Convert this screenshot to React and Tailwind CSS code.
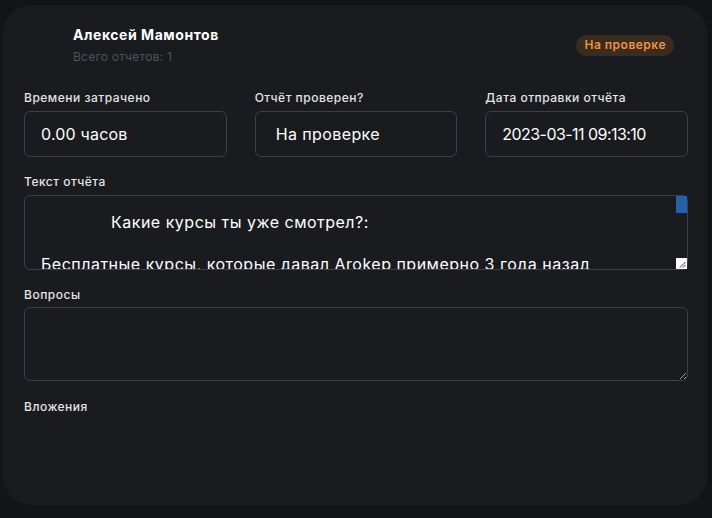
import React from "react";

const reportText =
  "              Какие курсы ты уже смотрел?:\n\nБесплатные курсы, которые давал Arokep примерно 3 года назад\n\nЧто ты уже умеешь делать?:\n\nВерстать простые страницы, немного знаю JavaScript\n\nПочему ты хочешь учиться у нас?:\n\nХочу стать разработчиком и найти работу\n\nСколько времени готов уделять?:\n\nПримерно 3-4 часа в день";

export default function App() {
  return (
    <div
      className="min-h-[518px] w-[712px] bg-[#131418] pt-[5px] pl-[3px] pr-[5px] pb-[13px]"
      style={{ fontFamily: "Inter, 'Noto Sans', sans-serif" }}
    >
      <div className="h-[500px] rounded-[28px] bg-[#1a1b1f] pt-[20px] pl-[21px] pr-[19px]">
        {/* header */}
        <div className="flex items-center">
          <div className="w-[37px] h-[37px] mr-3 shrink-0" />
          <div className="flex flex-col">
            <div className="text-[14px] leading-[20px] font-bold tracking-[0.55px] text-white">Алексей Мамонтов</div>
            <div className="mt-[4px] text-[12px] leading-[16px] tracking-[0.25px] text-[#4f525b]">Всего отчетов: 1</div>
          </div>
          <div className="ml-auto mr-[14px] h-[21px] px-2 rounded-full bg-[#3a2c20] flex items-center text-[12px] font-semibold tracking-[0.5px] text-[#ee9340]">
            На проверке
          </div>
        </div>

        {/* three fields */}
        <div className="mt-[25px] grid grid-cols-3 gap-x-[28px]">
          {[
            ["Времени затрачено", "0.00 часов", "pl-4 tracking-[0.2px]"],
            ["Отчёт проверен?", "На проверке", "pl-5 tracking-[0.4px]"],
            ["Дата отправки отчёта", "2023-03-11 09:13:10", "pl-4 tracking-[-0.55px]"],
          ].map(([label, value, pad]) => (
            <div key={label} className="flex flex-col">
              <div className="text-[12px] leading-[16px] font-medium tracking-[0.5px] text-[#e4e4e6]">{label}</div>
              <div
                className={`mt-[5px] h-[46px] rounded-md border border-[#3c3f4b] flex items-center text-[16px] text-white ${pad}`}
              >
                {value}
              </div>
            </div>
          ))}
        </div>

        {/* report text */}
        <div className="mt-[17px] text-[12px] leading-[16px] font-medium tracking-[0.5px] text-[#e4e4e6]">Текст отчёта</div>
        <div className="relative mt-[5px]">
          <textarea
            readOnly
            value={reportText}
            className="block w-full h-[75px] resize-none rounded-md border border-[#3c3f4b] bg-transparent px-4 py-4 text-[16px] leading-[21px] tracking-[0.5px] text-white outline-none"
            style={{ fontFamily: "Inter, 'Noto Sans', sans-serif" }}
          />
          <div className="absolute top-[1px] right-[1px] w-[11px] h-[17px] bg-[#2860a8]" />
          <div className="absolute bottom-[1px] right-[1px] w-[11px] h-[11px] bg-white">
            <svg width="11" height="11" viewBox="0 0 11 11" className="block">
              <line x1="9.5" y1="4" x2="4" y2="9.5" stroke="#3a3a3a" strokeWidth="1" />
              <line x1="9.5" y1="7" x2="7" y2="9.5" stroke="#3a3a3a" strokeWidth="1" />
            </svg>
          </div>
        </div>

        {/* questions */}
        <div className="mt-[17px] text-[12px] leading-[16px] font-medium tracking-[0.5px] text-[#e4e4e6]">Вопросы</div>
        <textarea
          readOnly
          value=""
          className="mt-[4px] block w-full h-[74px] rounded-md border border-[#3c3f4b] bg-transparent px-4 py-4 text-[16px] text-white outline-none"
        />

        {/* attachments */}
        <div className="mt-[18px] text-[12px] leading-[16px] font-medium tracking-[0.5px] text-[#e4e4e6]">Вложения</div>
      </div>
    </div>
  );
}
